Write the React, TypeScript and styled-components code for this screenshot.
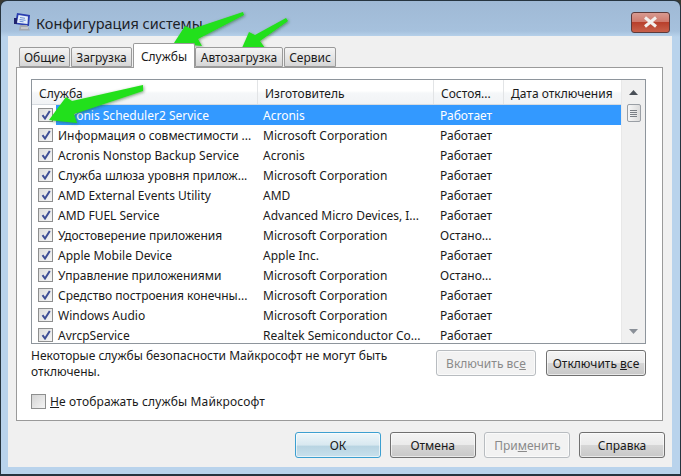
import styled, { createGlobalStyle } from 'styled-components';

const services = [
  { name: 'Acronis Scheduler2 Service', vendor: 'Acronis', state: 'Работает' },
  { name: 'Информация о совместимости ...', vendor: 'Microsoft Corporation', state: 'Работает' },
  { name: 'Acronis Nonstop Backup Service', vendor: 'Acronis', state: 'Работает' },
  { name: 'Служба шлюза уровня прилож...', vendor: 'Microsoft Corporation', state: 'Работает' },
  { name: 'AMD External Events Utility', vendor: 'AMD', state: 'Работает' },
  { name: 'AMD FUEL Service', vendor: 'Advanced Micro Devices, I...', state: 'Работает' },
  { name: 'Удостоверение приложения', vendor: 'Microsoft Corporation', state: 'Остано...' },
  { name: 'Apple Mobile Device', vendor: 'Apple Inc.', state: 'Работает' },
  { name: 'Управление приложениями', vendor: 'Microsoft Corporation', state: 'Остано...' },
  { name: 'Средство построения конечны...', vendor: 'Microsoft Corporation', state: 'Работает' },
  { name: 'Windows Audio', vendor: 'Microsoft Corporation', state: 'Работает' },
  { name: 'AvrcpService', vendor: 'Realtek Semiconductor Co...', state: 'Работает' },
];

const tabs = [
  { label: 'Общие', width: 51 },
  { label: 'Загрузка', width: 61 },
  { label: 'Службы', width: 62 },
  { label: 'Автозагрузка', width: 88 },
  { label: 'Сервис', width: 52 },
];

const CheckMark = () => (
  <svg width="10" height="10" viewBox="0 0 10 10">
    <path d="M1.5 5.2 L4 8.5 L8.8 1" fill="none" stroke="#3f4f96" strokeWidth="2" />
  </svg>
);

const App = () => (
  <Screen>
    <GlobalStyle />
    <Window>
      <TitleBar>
        <AppIcon width="20" height="20" viewBox="0 0 20 20">
          <path d="M4 1 L17 3 L16 14 L2 12z" fill="#2b3fb0" />
          <path d="M5.5 3 L15 4.5 L14.5 12 L4 10.8z" fill="#e4eefa" />
          <path d="M7 5.5l5 .8M6.5 7.5l6 .8M6.5 9.3l4 .5" stroke="#6d8fd6" strokeWidth="1" />
          <path d="M7 13h7l3 5.5H6z" fill="#a4a8b0" />
          <path d="M8 16h7" stroke="#e8e8e8" strokeWidth="1" />
          <rect x="1" y="6" width="3" height="6" fill="#20246e" />
        </AppIcon>
        <Title>Конфигурация системы</Title>
        <CloseButton>
          <svg width="17" height="12" viewBox="0 0 17 12">
            <path d="M3 1.5 L14 10.5 M14 1.5 L3 10.5" stroke="#f3f0ee" strokeWidth="3" />
          </svg>
        </CloseButton>
      </TitleBar>
      <Client>
        <TabRow>
          {tabs.map(tab => (
            <Tab key={tab.label} $active={tab.label === 'Службы'} $width={tab.width}>
              {tab.label}
            </Tab>
          ))}
        </TabRow>
        <Panel>
          <List>
            <Table>
              <HeaderRow>
                <HeaderCell $width={226}>Служба</HeaderCell>
                <HeaderCell $width={176}>Изготовитель</HeaderCell>
                <HeaderCell $width={70}>Состоя...</HeaderCell>
                <HeaderCell $width={119}>Дата отключения</HeaderCell>
              </HeaderRow>
              {services.map((service, index) => (
                <Row key={service.name}>
                  <CheckBox>
                    <CheckMark />
                  </CheckBox>
                  <RowText $selected={index === 0}>
                    <NameCell>{service.name}</NameCell>
                    <VendorCell>{service.vendor}</VendorCell>
                    <StateCell>{service.state}</StateCell>
                  </RowText>
                </Row>
              ))}
            </Table>
            <ScrollBar>
              <ScrollArrow>
                <svg width="9" height="5" viewBox="0 0 9 5">
                  <path d="M0 5 L4.5 0 L9 5z" fill="#4a5058" />
                </svg>
              </ScrollArrow>
              <ScrollThumb>
                <Grip />
                <Grip />
                <Grip />
                <Grip />
              </ScrollThumb>
              <ScrollSpacer />
              <ScrollArrow>
                <svg width="9" height="5" viewBox="0 0 9 5">
                  <path d="M0 0 L4.5 5 L9 0z" fill="#8a9098" />
                </svg>
              </ScrollArrow>
            </ScrollBar>
          </List>
          <NoteRow>
            <Note>Некоторые службы безопасности Майкрософт не могут быть отключены.</Note>
            <NoteButtons>
              <Button $disabled>
                Включить вс<u>е</u>
              </Button>
              <Button>
                Отключить <u>в</u>се
              </Button>
            </NoteButtons>
          </NoteRow>
          <HideRow>
            <EmptyBox />
            <span>
              <u>Н</u>е отображать службы Майкрософт
            </span>
          </HideRow>
        </Panel>
        <Footer>
          <Button $default $footer>
            ОК
          </Button>
          <Button $footer>Отмена</Button>
          <Button $footer $disabled>
            При<u>м</u>енить
          </Button>
          <Button $footer>Справка</Button>
        </Footer>
      </Client>
    </Window>
    <Arrows width="681" height="476" viewBox="0 0 681 476">
      <defs>
        <filter id="glow" x="-20%" y="-20%" width="140%" height="140%">
          <feDropShadow dx="1" dy="1" stdDeviation="1.5" floodColor="#1c5a1c" floodOpacity="0.55" />
        </filter>
      </defs>
      <g fill="#22e01a" filter="url(#glow)">
        <polygon points="174,43 185,26 192,29 243,12 244,15 198,39 202,46" />
        <polygon points="242,48 249,32 255,35 286,18 288,21 260,41 265,48" />
        <polygon points="49,120 66,97 72,101 143,85 143,91 74,114 77,123" />
      </g>
    </Arrows>
  </Screen>
);

export default App;

const GlobalStyle = createGlobalStyle`
  html, body {
    margin: 0;
    padding: 0;
    background: #3a3a32;
  }
  body {
    font-family: 'Noto Sans', 'Open Sans', sans-serif;
    font-size: 12px;
    color: #1a1a1a;
  }
`;

const Screen = styled.div`
  position: relative;
  width: 681px;
  height: 476px;
  overflow: hidden;
`;

const Window = styled.div`
  box-sizing: border-box;
  width: 681px;
  height: 476px;
  display: flex;
  flex-direction: column;
  padding: 0 8px 7px 7px;
  border: 1px solid #26343f;
  border-bottom-width: 2px;
  border-radius: 7px 7px 0 0;
  background: linear-gradient(180deg, #9fb9d5 0, #a6c1dd 30px, #b9d3ec 36px, #b9d3ec 100%);
`;

const TitleBar = styled.div`
  height: 35px;
  flex: none;
  display: flex;
  align-items: center;
  gap: 3px;
  padding-left: 5px;
`;

const AppIcon = styled.svg`
  margin-top: 7px;
  flex: none;
`;

const Title = styled.div`
  flex: 1;
  font-size: 14.5px;
  color: #1c2228;
  padding-top: 8px;
`;

const CloseButton = styled.div`
  box-sizing: border-box;
  width: 39px;
  height: 21px;
  margin-right: 2px;
  margin-top: 7px;
  display: flex;
  align-items: center;
  justify-content: center;
  border: 1px solid #5c3a3a;
  border-radius: 3px;
  background: linear-gradient(180deg, #d89a90 0, #cf7b6e 45%, #b8402c 50%, #c8604a 100%);
`;

const Client = styled.div`
  flex: 1;
  display: flex;
  flex-direction: column;
  padding: 7px 0 0 8px;
  background: #f0f0f0;
`;

const TabRow = styled.div`
  display: flex;
  align-items: flex-end;
  height: 24px;
  padding-left: 3px;
  position: relative;
  z-index: 1;
`;

const Tab = styled.div<{ $active?: boolean; $width: number }>`
  box-sizing: border-box;
  display: flex;
  align-items: center;
  justify-content: center;
  flex: none;
  width: ${p => p.$width}px;
  height: ${p => (p.$active ? '25px' : '20px')};
  margin: ${p => (p.$active ? '0 0 -1px' : '0 1px 0 0')};
  border: 1px solid #9a9a9a;
  border-bottom: ${p => (p.$active ? 'none' : '1px solid #9a9a9a')};
  border-radius: 2px 2px 0 0;
  background: ${p => (p.$active ? '#ffffff' : 'linear-gradient(180deg, #f4f4f4 0, #e6e6e6 50%, #d6d6d6 100%)')};
`;

const Panel = styled.div`
  box-sizing: border-box;
  width: 647px;
  height: 354px;
  padding: 11px 16px 0 14px;
  border: 1px solid #9a9a9a;
  background: #ffffff;
`;

const List = styled.div`
  box-sizing: border-box;
  display: flex;
  height: 265px;
  border: 1px solid #8e959c;
  overflow: hidden;
`;

const Table = styled.div`
  flex: 1;
  min-width: 0;
`;

const HeaderRow = styled.div`
  display: flex;
  height: 24px;
  background: linear-gradient(180deg, #ffffff 0, #ffffff 45%, #f5f7f9 55%, #f1f3f5 100%);
  border-bottom: 1px solid #d6dbe0;
`;

const HeaderCell = styled.div<{ $width: number }>`
  box-sizing: border-box;
  width: ${p => p.$width}px;
  flex: none;
  display: flex;
  align-items: center;
  padding-left: 7px;
  padding-top: 3px;
  border-right: 1px solid #e2e4e6;
  white-space: nowrap;
`;

const Row = styled.div`
  display: flex;
  align-items: center;
  height: 20px;
  padding-left: 6px;
`;

const CheckBox = styled.div`
  box-sizing: border-box;
  flex: none;
  width: 15px;
  height: 14px;
  margin-right: 3px;
  display: flex;
  align-items: center;
  justify-content: center;
  border: 1px solid #8e8f8f;
  background: linear-gradient(135deg, #dcdcdc 0, #f6f6f6 100%);
`;

const RowText = styled.div<{ $selected?: boolean }>`
  flex: 1;
  display: flex;
  align-items: center;
  height: 20px;
  background: ${p => (p.$selected ? '#3399ff' : 'transparent')};
  color: ${p => (p.$selected ? '#ffffff' : '#1a1a1a')};
  white-space: nowrap;
`;

const NameCell = styled.div`
  box-sizing: border-box;
  width: 207px;
  padding-left: 2px;
`;

const VendorCell = styled.div`
  width: 177px;
`;

const StateCell = styled.div`
  width: 70px;
`;

const ScrollBar = styled.div`
  flex: none;
  width: 23px;
  display: flex;
  flex-direction: column;
  align-items: center;
  background: #f0f0f0;
  border-left: 1px solid #e8e8e8;
`;

const ScrollArrow = styled.div`
  flex: none;
  height: 24px;
  display: flex;
  align-items: center;
  justify-content: center;
`;

const ScrollThumb = styled.div`
  box-sizing: border-box;
  flex: none;
  width: 14px;
  height: 18px;
  display: flex;
  flex-direction: column;
  justify-content: center;
  align-items: center;
  gap: 1px;
  border: 1px solid #9a9fa5;
  border-radius: 2px;
  background: linear-gradient(90deg, #f6f6f6 0, #dcdcdc 100%);
`;

const Grip = styled.div`
  width: 7px;
  height: 1px;
  background: #7a7f85;
`;

const ScrollSpacer = styled.div`
  flex: 1;
`;

const NoteRow = styled.div`
  display: flex;
  justify-content: space-between;
  margin-top: 4px;
  height: 40px;
`;

const Note = styled.div`
  width: 400px;
  line-height: 16px;
`;

const NoteButtons = styled.div`
  display: flex;
  gap: 10px;
  padding-top: 2px;
`;

const Button = styled.div<{ $disabled?: boolean; $default?: boolean; $footer?: boolean }>`
  box-sizing: border-box;
  flex: none;
  width: ${p => (p.$footer ? '86px' : '100px')};
  height: 26px;
  display: flex;
  align-items: center;
  justify-content: center;
  white-space: pre;
  border: 1px solid ${p => (p.$disabled ? '#b8bcc0' : p.$default ? '#3c9fd0' : '#707070')};
  border-radius: 3px;
  color: ${p => (p.$disabled ? '#8a8a8a' : '#1a1a1a')};
  background: ${p =>
    p.$disabled
      ? '#f2f2f2'
      : p.$default
        ? 'linear-gradient(180deg, #eef6fa 0, #d8e8f0 50%, #b8d4e2 55%, #c8e0ec 100%)'
        : 'linear-gradient(180deg, #f4f4f4 0, #ebebeb 48%, #d6d6d6 52%, #c8c8c8 100%)'};
  box-shadow: inset 0 0 0 1px rgba(255, 255, 255, 0.6);
`;

const HideRow = styled.div`
  display: flex;
  align-items: center;
  gap: 4px;
  margin-top: 5px;
  height: 16px;
  letter-spacing: 0.15px;
`;

const EmptyBox = styled.div`
  box-sizing: border-box;
  width: 15px;
  height: 15px;
  border: 1px solid #8e8f8f;
  background: linear-gradient(135deg, #d4d4d4 0, #f4f4f4 100%);
`;

const Footer = styled.div`
  display: flex;
  justify-content: flex-end;
  gap: 8.67px;
  margin-top: 11px;
  padding-right: 7px;
`;

const Arrows = styled.svg`
  position: absolute;
  left: 0;
  top: 0;
  pointer-events: none;
`;
